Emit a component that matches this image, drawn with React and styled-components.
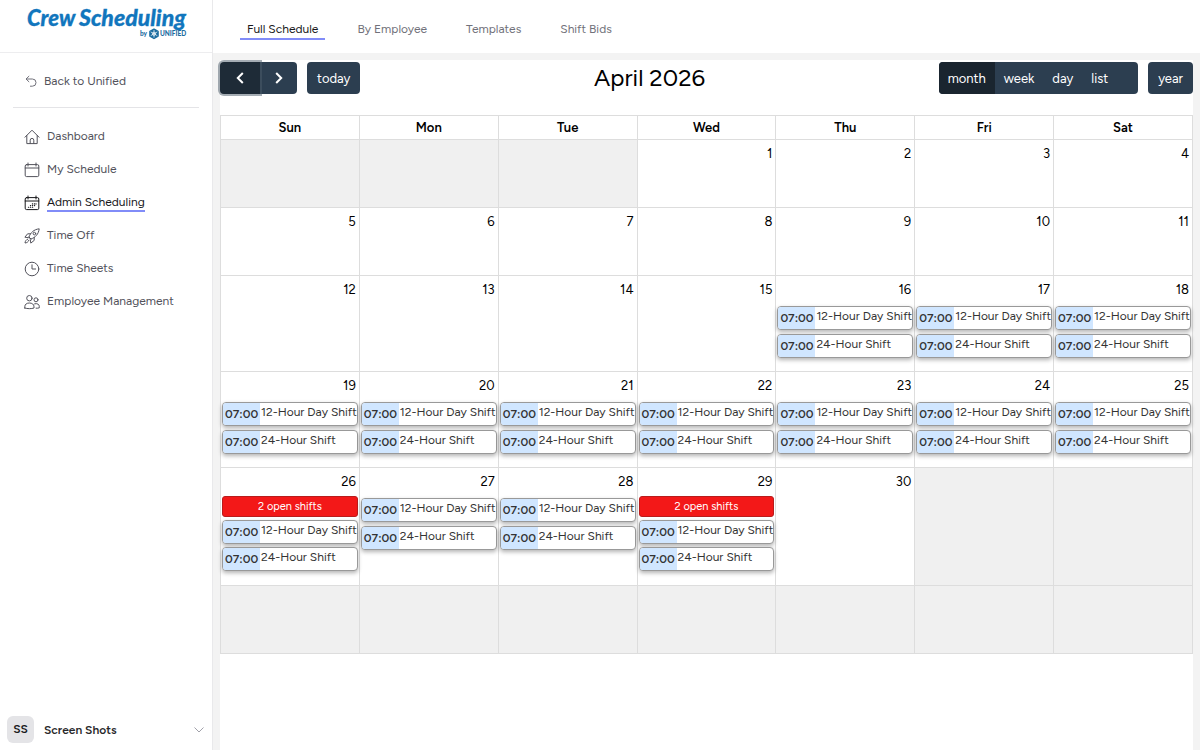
import React from "react";
import styled, { createGlobalStyle } from "styled-components";

const GlobalStyle = createGlobalStyle`
  * {
    box-sizing: border-box;
  }
  body {
    margin: 0;
    background: #f3f3f3;
    color: #000;
    font-family: Figtree, Lato, "Liberation Sans", sans-serif;
  }
  button {
    font-family: inherit;
    cursor: pointer;
  }
  a {
    color: inherit;
    text-decoration: none;
  }
`;

const weekDays = ["Sun", "Mon", "Tue", "Wed", "Thu", "Fri", "Sat"];

// April 2026 starts on a Wednesday
const days = Array.from({ length: 42 }, (_, i) => {
  const date = i - 2;
  return date >= 1 && date <= 30 ? date : null;
});
const weeks = [0, 1, 2, 3, 4, 5].map((w) => days.slice(w * 7, w * 7 + 7));

const shifts = [
  { time: "07:00", title: "12-Hour Day Shift" },
  { time: "07:00", title: "24-Hour Shift" },
];
const openShifts = { 26: 2, 29: 2 };
const hasShifts = (date) => date >= 16 && date <= 29;

const tabs = ["Full Schedule", "By Employee", "Templates", "Shift Bids"];

const HomeIcon = () => (
  <Icon viewBox="0 0 16 16">
    <path d="M1 8.2 8 1.2l7 7M2.8 6.6v8h10.4v-8M6.2 14.4v-3.2a1.8 1.8 0 0 1 3.6 0v3.2" />
  </Icon>
);

const CalendarIcon = ({ filled }) => (
  <Icon viewBox="0 0 16 16">
    <rect x="1.2" y="2.6" width="13.6" height="12" rx="1.4" />
    <path d="M1.2 6h13.6M4 1v3M12 1v3" />
    {filled && (
      <path
        d="M4.4 12.3h.3M6.4 12.3h.3M8.4 12.3h.3M6.4 10.6h.3M8.4 10.6h.3M10.4 10.6h.3M8.4 8.9h.3M10.4 8.9h.3M12 8.9h.1"
        strokeWidth="1.1"
      />
    )}
  </Icon>
);

const RocketIcon = () => (
  <Icon viewBox="0 0 16 16">
    <path d="M5 9C6.4 4.6 10 1.4 15.2.8c-.6 5.2-3.8 8.8-8.2 10.2zM5 9l2 2" />
    <circle cx="10.4" cy="5.6" r="1.3" />
    <path d="M6.4 5.8H3.6L.9 9.2l3.4.5M10.2 9.6v2.8l-3.4 2.7-.5-3.4M3.6 11.2C2 11.7 1.2 13.2 1 15c1.8-.2 3.3-1 3.8-2.6" />
  </Icon>
);

const ClockIcon = () => (
  <Icon viewBox="0 0 16 16">
    <circle cx="8" cy="8" r="6.8" />
    <path d="M8 3.8V8h3.6" />
  </Icon>
);

const PeopleIcon = () => (
  <Icon viewBox="0 0 16 16">
    <circle cx="5.4" cy="4.2" r="2.7" />
    <path d="M.8 14v-1.2C.8 10.2 2.8 9 5.400 9s4.600 1.200 4.600 3.800V14c-2.600.9-6.600.9-9.200 0z" />
    <circle cx="12" cy="5.8" r="2" />
    <path d="M10.6 9.800c2.800-.8 4.700.6 4.700 2.800v1.200c-1 .4-2.200.5-3.200.4" />
  </Icon>
);

const navItems = [
  { label: "Dashboard", icon: <HomeIcon /> },
  { label: "My Schedule", icon: <CalendarIcon /> },
  { label: "Admin Scheduling", icon: <CalendarIcon filled />, active: true },
  { label: "Time Off", icon: <RocketIcon /> },
  { label: "Time Sheets", icon: <ClockIcon /> },
  { label: "Employee Management", icon: <PeopleIcon /> },
];

const Logo = () => (
  <LogoSvg viewBox="0 0 164 42" role="img" aria-label="Crew Scheduling by Unified">
    <g
      fontFamily="Lato, sans-serif"
      fontWeight="900"
      fontStyle="italic"
      fill="#1176bd"
      stroke="#1176bd"
      strokeWidth="0.3"
    >
      <text x="1" y="26" fontSize="22">Crew</text>
      <text x="53" y="26" fontSize="23">Scheduling</text>
    </g>
    <g fontFamily="Lato, sans-serif" fontWeight="900" fontSize="6.5" fill="#1b6c9f">
      <text x="114" y="36">by</text>
      <text x="134" y="36">UNIFIED</text>
    </g>
    <g fill="none" stroke="#1b6c9f">
      <path d="M128 29.2l4 2.3v4.6l-4 2.3-4-2.3v-4.6z" fill="#1b6c9f" strokeWidth="1.6" strokeLinejoin="round" />
      <path d="M128 30v7.6M124.7 31.9l6.6 3.8M131.3 31.9l-6.6 3.8" stroke="#fff" strokeWidth="0.7" />
      <circle cx="128" cy="33.8" r="1.6" stroke="#fff" strokeWidth="0.7" />
    </g>
  </LogoSvg>
);

const Shift = ({ time, title }) => (
  <ShiftLink href="#shift">
    <ShiftTime>{time}</ShiftTime>
    <ShiftTitle>{title}</ShiftTitle>
  </ShiftLink>
);

const Day = ({ date }) => {
  if (!date) {
    return <DayCell $disabled />;
  }
  const open = openShifts[date];
  return (
    <DayCell>
      <DayNumber>{date}</DayNumber>
      {hasShifts(date) && (
        <Shifts $compact={!!open}>
          {open && <OpenShifts type="button">{open} open shifts</OpenShifts>}
          {shifts.map((shift) => (
            <Shift key={shift.title} {...shift} />
          ))}
        </Shifts>
      )}
    </DayCell>
  );
};

const App = () => {
  return (
    <Page>
      <GlobalStyle />
      <Sidebar>
        <LogoBar>
          <Logo />
        </LogoBar>
        <BackLink href="#back">
          <BackIcon viewBox="0 0 12 12">
            <path d="M4.2 1 1 4l3.2 3M1 4h6.4a3.6 3.6 0 0 1 0 7.2H5" />
          </BackIcon>
          Back to Unified
        </BackLink>
        <Nav>
          {navItems.map((item) => (
            <NavItem key={item.label} href="#nav" $active={item.active}>
              {item.icon}
              <NavLabel $active={item.active}>{item.label}</NavLabel>
            </NavItem>
          ))}
        </Nav>
        <UserMenu type="button">
          <Avatar>SS</Avatar>
          <UserName>Screen Shots</UserName>
          <Chevron viewBox="0 0 10 6">
            <path d="M.5.5 5 5 9.500.5" />
          </Chevron>
        </UserMenu>
      </Sidebar>

      <Main>
        <Tabs>
          {tabs.map((tab, i) => (
            <Tab key={tab} href="#tab" $active={i === 0}>
              {tab}
            </Tab>
          ))}
        </Tabs>
        <Panel>
          <Toolbar>
            <ToolbarSide>
              <ButtonGroup>
                <ArrowButton type="button" aria-label="Previous month" $focused>
                  <Arrow viewBox="0 0 8 12">
                    <path d="M6.8 1 1.8 6l5 5" />
                  </Arrow>
                </ArrowButton>
                <ArrowButton type="button" aria-label="Next month">
                  <Arrow viewBox="0 0 8 12">
                    <path d="m1.2 1 5 5-5 5" />
                  </Arrow>
                </ArrowButton>
              </ButtonGroup>
              <ToolbarButton type="button" $rounded>
                today
              </ToolbarButton>
            </ToolbarSide>
            <Title>April 2026</Title>
            <ToolbarSide>
              <ViewGroup>
                <ToolbarButton type="button" $active>
                  month
                </ToolbarButton>
                <ToolbarButton type="button">week</ToolbarButton>
                <ToolbarButton type="button">day</ToolbarButton>
                <ToolbarButton type="button">list</ToolbarButton>
              </ViewGroup>
              <ToolbarButton type="button" $rounded>
                year
              </ToolbarButton>
            </ToolbarSide>
          </Toolbar>
          <Calendar>
            <thead>
              <tr>
                {weekDays.map((day) => (
                  <WeekDay key={day} scope="col">
                    {day}
                  </WeekDay>
                ))}
              </tr>
            </thead>
            <tbody>
              {weeks.map((week, w) => (
                <tr key={w}>
                  {week.map((date, d) => (
                    <Day key={d} date={date} />
                  ))}
                </tr>
              ))}
            </tbody>
          </Calendar>
        </Panel>
      </Main>
    </Page>
  );
};

const Page = styled.div`
  display: flex;
  min-height: 100vh;
`;

const Sidebar = styled.aside`
  display: flex;
  flex-direction: column;
  flex: none;
  width: 213px;
  background: #fff;
  border-right: 1px solid #e9e9eb;
`;

const LogoBar = styled.div`
  height: 53px;
  padding-left: 26px;
  border-bottom: 1px solid #ededef;
`;

const LogoSvg = styled.svg`
  display: block;
  width: 164px;
  height: 42px;
`;

const BackLink = styled.a`
  display: flex;
  align-items: center;
  gap: 7px;
  height: 55px;
  margin: 0 13px;
  padding: 2px 0 0 12px;
  border-bottom: 1px solid #e4e4e7;
  color: #52525b;
  font-size: 12px;
`;

const BackIcon = styled.svg`
  width: 12px;
  height: 12px;
  fill: none;
  stroke: #71717a;
`;

const Nav = styled.nav`
  display: flex;
  flex-direction: column;
  padding: 12px 24px;
`;

const NavItem = styled.a`
  display: flex;
  align-items: center;
  gap: 7px;
  height: 33px;
  color: ${({ $active }) => ($active ? "#18181b" : "#52525b")};
  font-size: 12px;
  white-space: nowrap;
`;

const NavLabel = styled.span`
  line-height: 15px;
  box-shadow: ${({ $active }) => ($active ? "0 2px 0 #818cf8" : "none")};
`;

const Icon = styled.svg`
  flex: none;
  width: 16px;
  height: 16px;
  fill: none;
  stroke: currentColor;
  stroke-linecap: round;
  stroke-linejoin: round;
`;

const UserMenu = styled.button`
  display: flex;
  align-items: center;
  gap: 10px;
  margin-top: auto;
  padding: 7px 8px 7px 7px;
  border: 0;
  background: none;
`;

const Avatar = styled.span`
  width: 27px;
  border-radius: 6px;
  background: #e4e4e7;
  color: #18181b;
  font-size: 12px;
  font-weight: 600;
  line-height: 27px;
`;

const UserName = styled.span`
  flex: 1;
  color: #27272a;
  font-size: 12px;
  font-weight: 600;
  text-align: left;
`;

const Chevron = styled.svg`
  width: 10px;
  height: 6px;
  fill: none;
  stroke: #a1a1aa;
`;

const Main = styled.main`
  display: flex;
  flex: 1;
  flex-direction: column;
  min-width: 0;
`;

const Tabs = styled.nav`
  display: flex;
  gap: 25px;
  height: 53px;
  padding: 20px 27px 0;
  background: #fff;
`;

const Tab = styled.a`
  height: 20px;
  padding: 0 7px;
  border-bottom: 2px solid ${({ $active }) => ($active ? "#818cf8" : "transparent")};
  color: ${({ $active }) => ($active ? "#18181b" : "#71717a")};
  font-size: 12px;
  line-height: 18px;
`;

const Panel = styled.section`
  flex: 1;
  margin: 7px 7px 0;
  background: #fff;
`;

const Toolbar = styled.div`
  display: flex;
  align-items: flex-start;
  justify-content: space-between;
  height: 55px;
  padding-top: 2px;
`;

const ToolbarSide = styled.div`
  display: flex;
  gap: 10px;
`;

const Title = styled.h2`
  margin: 0;
  font-size: 24px;
  font-weight: 400;
  line-height: 32px;
`;

const ButtonGroup = styled.div`
  display: flex;
`;

const ViewGroup = styled.div`
  display: flex;
  overflow: hidden;
  padding-right: 21px;
  border-radius: 4px;
  background: #2c3e50;
`;

const ToolbarButton = styled.button`
  height: 32px;
  padding: ${({ $rounded }) => ($rounded ? "0 10px" : "0 9px")};
  border: 0;
  border-radius: ${({ $rounded }) => ($rounded ? "4px" : "0")};
  background: ${({ $active }) => ($active ? "#1a252f" : "#2c3e50")};
  color: #fff;
  font-size: 13px;
`;

const ArrowButton = styled(ToolbarButton)`
  width: ${({ $focused }) => ($focused ? "40px" : "37px")};
  border-radius: ${({ $focused }) => ($focused ? "4px 0 0 4px" : "0 4px 4px 0")};
  background: ${({ $focused }) => ($focused ? "#1e2b37" : "#2c3e50")};
  box-shadow: ${({ $focused }) => ($focused ? "0 0 0 2px rgba(76, 91, 106, 0.5)" : "none")};
  z-index: ${({ $focused }) => ($focused ? 1 : 0)};
`;

const Arrow = styled.svg`
  display: block;
  width: 8px;
  height: 12px;
  margin: 0 auto;
  fill: none;
  stroke: #fff;
  stroke-width: 2;
`;

const Calendar = styled.table`
  width: 100%;
  border-collapse: collapse;
  table-layout: fixed;
`;

const WeekDay = styled.th`
  height: 24px;
  padding: 0;
  border: 1px solid #ddd;
  font-size: 13px;
  font-weight: 600;
`;

const DayCell = styled.td`
  height: 68px;
  padding: 0 1px;
  border: 1px solid #ddd;
  background: ${({ $disabled }) => ($disabled ? "#f0f0f0" : "#fff")};
  vertical-align: top;
`;

const DayNumber = styled.div`
  padding: 4px 2px 0;
  font-size: 13px;
  line-height: 20px;
  text-align: right;
`;

const Shifts = styled.div`
  display: flex;
  flex-direction: column;
  gap: ${({ $compact }) => ($compact ? "3px" : "4px")};
  padding: ${({ $compact }) => ($compact ? "4px 0 14px" : "6px 0 13px")};
`;

const ShiftLink = styled.a`
  display: flex;
  height: 24px;
  border: 1px solid #999;
  border-radius: 4px;
  background: #fff;
  box-shadow: 0 2px 4px rgba(0, 0, 0, 0.3);
  color: #333;
  font-size: 12px;
  white-space: nowrap;
`;

const ShiftTime = styled.span`
  flex: none;
  width: 37px;
  padding-left: 2px;
  border-radius: 3px 0 0 3px;
  background: #d0e6ff;
  font-weight: 600;
  line-height: 22px;
`;

const ShiftTitle = styled.span`
  padding-left: 1px;
  line-height: 19px;
`;

const OpenShifts = styled.button`
  height: 21px;
  padding: 0;
  border: 1px solid #b91c1c;
  border-radius: 3px;
  background: #f31818;
  color: #fff;
  font-size: 11px;
`;

export default App;
